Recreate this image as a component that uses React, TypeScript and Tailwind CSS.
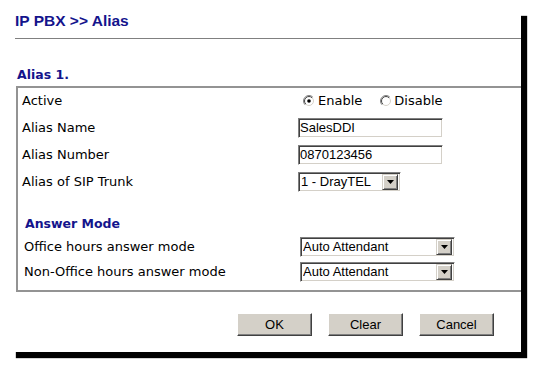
import React from 'react'

const labelFont = { fontFamily: '"DejaVu Sans", Verdana, sans-serif' }
const ctrlFont = { fontFamily: '"Liberation Sans", Arial, sans-serif' }

const Radio = ({ checked }: { checked?: boolean }) => (
  <svg width="12" height="12" viewBox="0 0 12 12" className="shrink-0">
    <defs>
      <linearGradient id="ro" x1="0" y1="0" x2="1" y2="1">
        <stop offset="0.45" stopColor="#808080" />
        <stop offset="0.55" stopColor="#ffffff" />
      </linearGradient>
      <linearGradient id="ri" x1="0" y1="0" x2="1" y2="1">
        <stop offset="0.45" stopColor="#404040" />
        <stop offset="0.55" stopColor="#d4d0c8" />
      </linearGradient>
    </defs>
    <circle cx="6" cy="6" r="5.5" fill="none" stroke="url(#ro)" strokeWidth="1" />
    <circle cx="6" cy="6" r="4.5" fill="#fff" stroke="url(#ri)" strokeWidth="1" />
    {checked && <circle cx="6" cy="6" r="1.8" fill="#000" />}
  </svg>
)

const TextBox = ({ value }: { value: string }) => (
  <div
    className="w-[145px] h-[20px] flex items-center px-[1px] bg-white text-[13px] text-black border border-t-[#808080] border-l-[#808080] border-r-white border-b-white shadow-[inset_1px_1px_0_#404040,inset_-1px_-1px_0_#d4d0c8]"
    style={ctrlFont}
  >
    {value}
  </div>
)

const Select = ({ value, width }: { value: string; width: string }) => (
  <div
    className={`${width} h-[20px] flex items-center pl-[2px] pr-[2px] bg-white text-[13px] text-black border border-t-[#808080] border-l-[#808080] border-r-white border-b-white shadow-[inset_1px_1px_0_#404040,inset_-1px_-1px_0_#d4d0c8]`}
    style={ctrlFont}
  >
    <span className="flex-1 whitespace-nowrap overflow-hidden">{value}</span>
    {/* dropdown button */}
    <div className="w-[16px] h-[16px] flex items-center justify-center bg-[#d4d0c8] border border-t-[#d4d0c8] border-l-[#d4d0c8] border-r-[#404040] border-b-[#404040] shadow-[inset_1px_1px_0_#fff,inset_-1px_-1px_0_#808080]">
      <svg width="7" height="4" viewBox="0 0 7 4">
        <path d="M0 0h7L3.5 4z" fill="#000" />
      </svg>
    </div>
  </div>
)

const Btn = ({ children }: { children: React.ReactNode }) => (
  <button
    className="w-[75px] h-[23px] bg-[#d4d0c8] text-[13px] text-black border border-t-white border-l-white border-r-[#404040] border-b-[#404040] shadow-[inset_-1px_-1px_0_#808080]"
    style={ctrlFont}
  >
    {children}
  </button>
)

const Row = ({ label, h, children }: { label: string; h: string; children?: React.ReactNode }) => (
  <div className={`grid grid-cols-[276px_1fr] items-center ${h}`}>
    <span className="text-[13px] text-black whitespace-nowrap" style={labelFont}>{label}</span>
    <div className="flex items-center">{children}</div>
  </div>
)

export default function App() {
  return (
    <div className="w-[544px] h-[375px] bg-white">
      <div className="w-[521px] h-[352px] bg-white overflow-hidden shadow-[11px_11px_1px_-5px_#000] flex flex-col">
        {/* Title */}
        <div
          className="mt-[12px] ml-[15px] h-[18px] flex items-center text-[15.5px] font-bold text-[#14148c]"
          style={ctrlFont}
        >
          IP PBX &gt;&gt; Alias
        </div>
        <div className="mt-[8px] ml-[15px] h-px bg-[#808080]" />

        {/* Section title */}
        <div
          className="mt-[28px] ml-[17px] h-[16px] flex items-center text-[12.5px] font-bold text-[#14148c]"
          style={labelFont}
        >
          Alias 1.
        </div>

        {/* Box */}
        <div className="mt-[3px] ml-[16px] mr-[-10px] border-2 border-[#939393] pl-[4px] pb-[5px]">
          <Row label="Active" h="h-[26px]">
            <div className="flex items-center ml-[5px] text-[13px] text-black" style={labelFont}>
              <Radio checked />
              <span className="ml-[3px]">Enable</span>
              <span className="ml-[18px] flex items-center">
                <Radio />
                <span className="ml-[2px]">Disable</span>
              </span>
            </div>
          </Row>
          <Row label="Alias Name" h="h-[27px]">
            <TextBox value="SalesDDI" />
          </Row>
          <Row label="Alias Number" h="h-[27px]">
            <TextBox value="0870123456" />
          </Row>
          <Row label="Alias of SIP Trunk" h="h-[27px]">
            <Select value="1 - DrayTEL" width="w-[103px]" />
          </Row>

          {/* Answer mode */}
          <div className="mt-[19px] pl-[2px]">
            <div
              className="h-[20px] flex items-center pl-[1px] text-[12.5px] font-bold text-[#14148c]"
              style={labelFont}
            >
              Answer Mode
            </div>
            <Row label="Office hours answer mode" h="h-[25px]">
              <Select value="Auto Attendant" width="w-[155px]" />
            </Row>
            <Row label="Non-Office hours answer mode" h="h-[26px]">
              <Select value="Auto Attendant" width="w-[155px]" />
            </Row>
          </div>
        </div>

        {/* Buttons */}
        <div className="mt-[21px] flex justify-end gap-4 pr-[27px]">
          <Btn>OK</Btn>
          <Btn>Clear</Btn>
          <Btn>Cancel</Btn>
        </div>
      </div>
    </div>
  )
}
